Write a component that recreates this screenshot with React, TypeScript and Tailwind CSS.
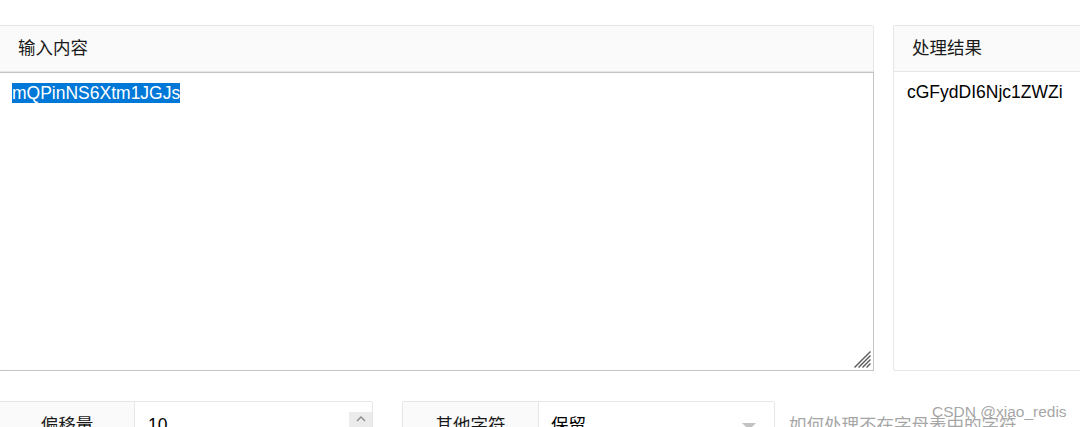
const font = { fontFamily: '"Liberation Sans", "Noto Sans CJK SC", sans-serif' };

function ResizeGrip() {
  return (
    <svg className="absolute bottom-[1px] right-[1px]" width="19" height="19" viewBox="0 0 19 19">
      <g stroke="#5a5a5a" strokeWidth="1.3" strokeLinecap="square">
        <line x1="2" y1="17" x2="17" y2="2" />
        <line x1="6" y1="17" x2="17" y2="6" />
        <line x1="10" y1="17" x2="17" y2="10" />
        <line x1="14" y1="17" x2="17" y2="14" />
      </g>
    </svg>
  );
}

function Panel({ title, width, children }: { title: string; width: string; children: React.ReactNode }) {
  return (
    <div className={`${width} shrink-0 flex flex-col border border-[#e6e6e6] rounded-[2px] bg-white`}>
      <div className="h-[46px] flex items-center pl-[18px] bg-[#fafafa] border-b border-[#e6e6e6] text-[17.5px] text-[#1a1a1a]">
        {title}
      </div>
      {children}
    </div>
  );
}

export default function App() {
  return (
    <div className="w-[1080px] h-[427px] overflow-hidden bg-white relative" style={font}>
      <div className="flex gap-[19px] pt-[25px] -ml-px">
        <Panel title="输入内容" width="w-[875px]">
          <div className="relative h-[299px] border border-[#c4c4c4] -mx-px -mb-px px-[12px] pt-[10px] leading-[20px] text-[17.5px]">
            <span className="bg-[#0078d7] text-white">mQPinNS6Xtm1JGJs</span>
            <ResizeGrip />
          </div>
        </Panel>
        <Panel title="处理结果" width="w-[300px]">
          <div className="h-[298px] px-[13px] pt-[10px] leading-[20px] text-[17.5px] text-black">cGFydDI6Njc1ZWZi</div>
        </Panel>
      </div>

      <div className="flex items-start mt-[30px] -ml-px">
        <div className="flex w-[374px] h-[46px] border border-[#e6e6e6] rounded-[2px]">
          <div className="w-[135px] shrink-0 bg-[#fafafa] border-r border-[#e6e6e6] flex items-start justify-center text-[17.5px] text-[#1a1a1a] pt-[10px]">
            偏移量
          </div>
          <div className="flex-1 flex items-start">
            <div className="flex-1 pl-[13px] pt-[10px] text-[17.5px] text-black">10</div>
            <div className="w-[23px] mt-[10px] h-[34px] bg-[#ebebeb] flex flex-col items-center">
              <svg width="10" height="8" viewBox="0 0 10 8" className="mt-[3px]">
                <path d="M1 6 L5 2 L9 6" stroke="#8a8a8a" strokeWidth="1.4" fill="none" />
              </svg>
            </div>
          </div>
        </div>

        <div className="flex w-[373px] h-[46px] ml-[29px] border border-[#e6e6e6] rounded-[2px]">
          <div className="w-[136px] shrink-0 bg-[#fafafa] border-r border-[#e6e6e6] flex items-start justify-center text-[17.5px] text-[#1a1a1a] pt-[10px]">
            其他字符
          </div>
          <div className="flex-1 flex items-start justify-between pl-[12px] pr-[18px] pt-[10px]">
            <span className="text-[17.5px] text-black">保留</span>
            <svg width="14" height="8" viewBox="0 0 14 8" className="mt-[11px]">
              <path d="M0 0 L14 0 L7 7 Z" fill="#c2c2c2" />
            </svg>
          </div>
        </div>

        <div className="ml-[14px] pt-[11px] text-[17.5px] text-[#a6a6a6] whitespace-nowrap">如何处理不在字母表中的字符</div>
      </div>

      <div className="absolute left-[932px] top-[400px] text-[15.5px] text-[#9a9a9a]/90 whitespace-nowrap">CSDN @xiao_redis</div>
    </div>
  );
}
